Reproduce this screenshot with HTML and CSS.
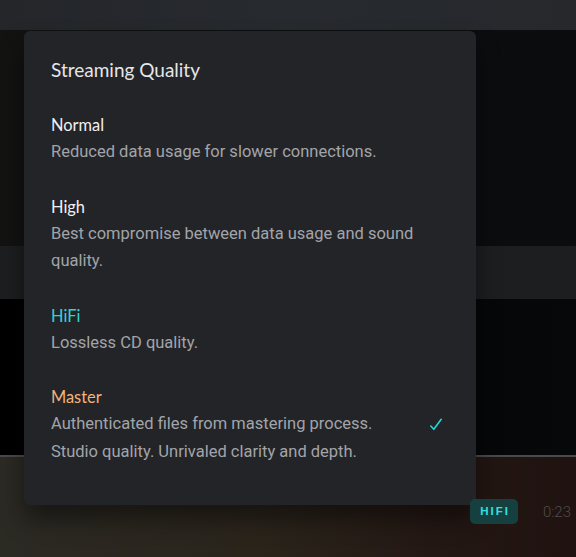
FILE: index.html
```html
<!DOCTYPE html>
<html>
<head>
<meta charset="utf-8">
<link rel="stylesheet" href="styles.css">
</head>
<body>
<div class="app">
  <div class="topbar"></div>
  <div class="area dark1"></div>
  <div class="area band"></div>
  <div class="area dark2"></div>
  <div class="player">
    <div class="player-right">
      <span class="badge">HIFI</span>
      <span class="time">0:23</span>
    </div>
  </div>

  <div class="menu">
    <div class="menu-title">Streaming Quality</div>
    <div class="option">
      <div class="opt-name">Normal</div>
      <div class="opt-desc">Reduced data usage for slower connections.</div>
    </div>
    <div class="option">
      <div class="opt-name">High</div>
      <div class="opt-desc">Best compromise between data usage and sound quality.</div>
    </div>
    <div class="option">
      <div class="opt-name hifi">HiFi</div>
      <div class="opt-desc">Lossless CD quality.</div>
    </div>
    <div class="option selected">
      <div class="opt-name master">Master</div>
      <div class="opt-row">
        <div class="opt-desc">Authenticated files from mastering process. Studio quality. Unrivaled clarity and depth.</div>
        <svg class="check" width="14" height="13" viewBox="0 0 14 13"><path d="M1.8 8 L4.8 11.3 L12.2 1.3" fill="none" stroke="#26d4dc" stroke-width="1.6" stroke-linecap="round" stroke-linejoin="round"/></svg>
      </div>
    </div>
  </div>
</div>
</body>
</html>
```

FILE: styles.css
```css
html, body {
  margin: 0;
  padding: 0;
  background: #0b0d0f;
}
.app {
  position: relative;
  width: 576px;
  height: 557px;
  overflow: hidden;
  display: flex;
  flex-direction: column;
  font-family: "Lato", "Noto Sans", sans-serif;
}
.topbar {
  height: 30px;
  background: linear-gradient(90deg, #24262a 0%, #272a2f 50%, #26282c 100%);
  flex: none;
}
.dark1 {
  height: 216px;
  background: linear-gradient(90deg, #131312 0%, #0e0f10 30%, #0a0c0e 100%);
}
.band {
  height: 53px;
  background: #1c1e20;
}
.dark2 {
  height: 156px;
  background: linear-gradient(90deg, #010101 0%, #040506 60%, #070809 100%);
  border-bottom: 2px solid #4a4a4a;
}
.area { flex: none; }
.player {
  flex: 1;
  background: linear-gradient(90deg, #2c2a24 0%, #2a241b 45%, #241814 75%, #1f1210 100%);
  display: flex;
  justify-content: flex-end;
}
.player-right {
  display: flex;
  align-items: center;
  gap: 25px;
  margin-top: 42px;
  margin-right: 5px;
  height: 25px;
}
.badge {
  position: relative;
  z-index: 2;
  background: #16403f;
  color: #2ee0e2;
  font-family: "Liberation Sans", Arial, sans-serif;
  font-weight: bold;
  font-size: 11.5px;
  letter-spacing: 2px;
  padding: 0 8px 0 10px;
  height: 25px;
  line-height: 25px;
  border-radius: 5px;
}
.time {
  color: #4e4c4a;
  font-family: "Roboto", sans-serif;
  font-weight: 300;
  font-size: 15px;
}

.menu {
  position: absolute;
  z-index: 1;
  left: 24px;
  top: 31px;
  width: 452px;
  box-sizing: border-box;
  padding: 25px 0 40px 27px;
  background: #232428;
  border-radius: 6px;
  box-shadow: 0 14px 24px rgba(0,0,0,0.45);
}
.menu-title {
  color: #e6e6e8;
  font-size: 19px;
  line-height: 27px;
  margin-bottom: 28px;
}
.option {
  margin-bottom: 27px;
  padding-right: 30px;
}
.option.selected {
  margin-bottom: 0;
  padding-right: 30px;
}
.opt-name {
  color: #f1f1f3;
  font-size: 16.4px;
  line-height: 27px;
}
.opt-name.hifi { color: #2fd3d8; }
.opt-name.master { color: #f2b47c; }
.opt-desc {
  color: #a2a4a8;
  font-family: "Roboto", "Noto Sans", sans-serif;
  font-size: 16.5px;
  line-height: 27.5px;
}
.opt-row {
  display: flex;
  align-items: flex-start;
  justify-content: space-between;
}
.opt-row .opt-desc {
  width: 340px;
}
.check {
  margin-top: 8px;
  margin-right: 3px;
}
```
